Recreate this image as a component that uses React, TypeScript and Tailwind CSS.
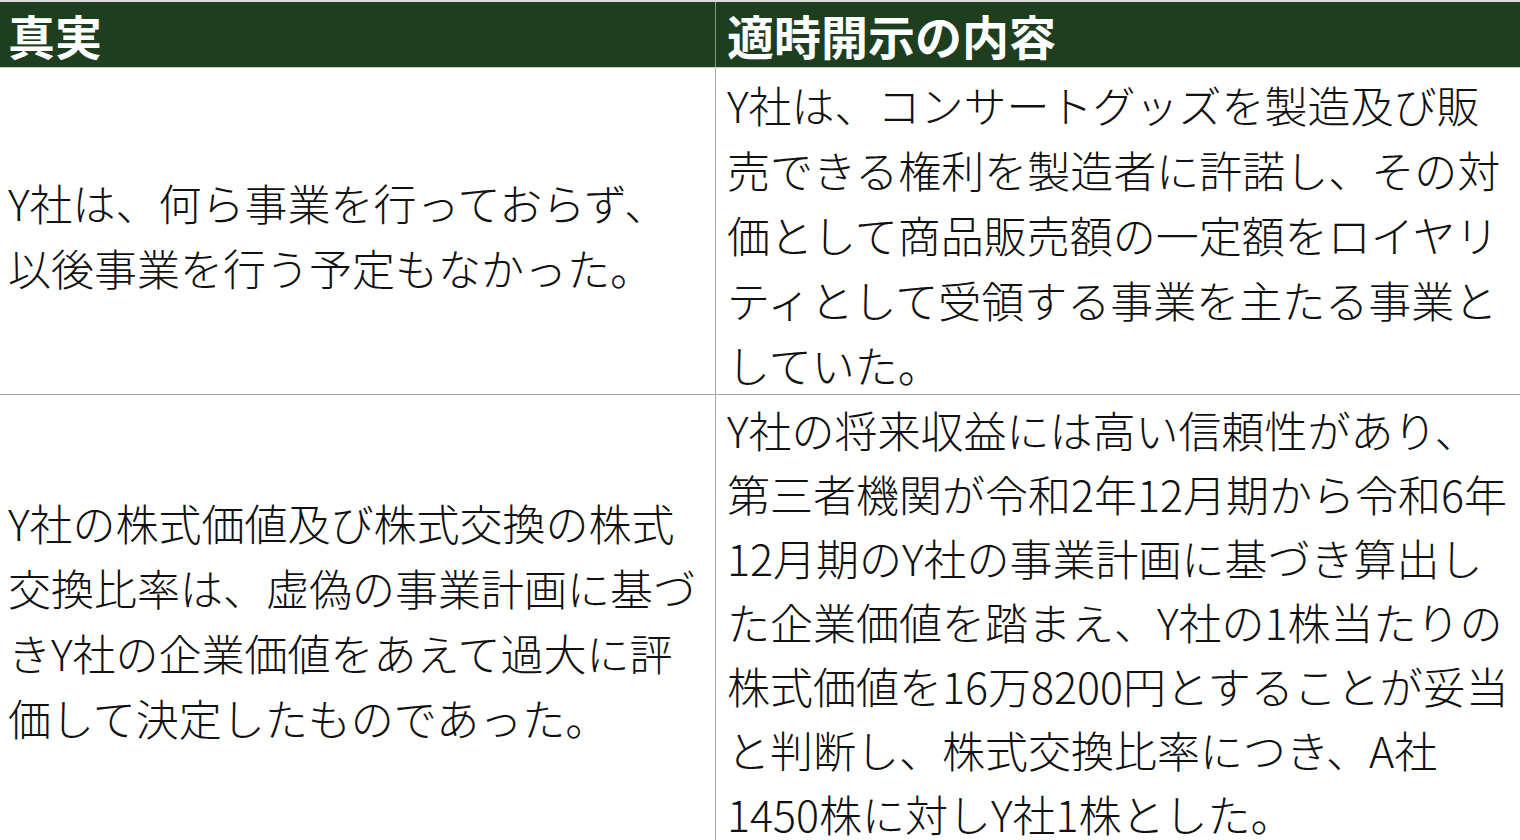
const jp = { fontFamily: '"Noto Sans CJK JP", "Noto Sans", sans-serif' };

const rows = [
  {
    left: ['Y社は、何ら事業を行っておらず、', '以後事業を行う予定もなかった。'],
    right: [
      'Y社は、コンサートグッズを製造及び販',
      '売できる権利を製造者に許諾し、その対',
      '価として商品販売額の一定額をロイヤリ',
      'ティとして受領する事業を主たる事業と',
      'していた。',
    ],
  },
  {
    left: [
      'Y社の株式価値及び株式交換の株式',
      '交換比率は、虚偽の事業計画に基づ',
      'きY社の企業価値をあえて過大に評',
      '価して決定したものであった。',
    ],
    right: [
      'Y社の将来収益には高い信頼性があり、',
      '第三者機関が令和2年12月期から令和6年',
      '12月期のY社の事業計画に基づき算出し',
      'た企業価値を踏まえ、Y社の1株当たりの',
      '株式価値を16万8200円とすることが妥当',
      'と判断し、株式交換比率につき、A社',
      '1450株に対しY社1株とした。',
    ],
  },
];

function Lines({ lines, tall }: { lines: string[]; tall?: boolean }) {
  return (
    <div
      className={`text-[43px] font-light text-[#111] whitespace-nowrap ${
        tall ? 'leading-[65px]' : 'leading-[64px]'
      }`}
    >
      {lines.map((l, i) => (
        <div key={i}>{l}</div>
      ))}
    </div>
  );
}

export default function App() {
  return (
    <div className="w-[1520px] h-[840px] overflow-hidden bg-white" style={jp}>
      <div className="border-t-2 border-[#d9dcd9]">
        <div className="grid grid-cols-[716px_1fr] bg-[#1e3f1f] h-[66px] border-b border-[#c9cfc9]">
          <div className="flex items-center pl-2 border-r border-[#8a9a8a] text-[47px] font-bold text-white leading-[60px]">
            真実
          </div>
          <div className="flex items-center pl-[11px] text-[47px] font-bold text-white leading-[60px]">
            適時開示の内容
          </div>
        </div>
        <div className="grid grid-cols-[716px_1fr] h-[327px] border-b border-[#a6a6a6]">
          <div className="flex items-center pl-2 pt-1 border-r border-[#a6a6a6]">
            <Lines lines={rows[0].left} tall />
          </div>
          <div className="flex items-center pl-[11px] pt-1">
            <Lines lines={rows[0].right} tall />
          </div>
        </div>
        <div className="grid grid-cols-[716px_1fr]">
          <div className="flex items-center pl-2 border-r border-[#a6a6a6]">
            <Lines lines={rows[1].left} tall />
          </div>
          <div className="pl-[11px] pt-[2px]">
            <Lines lines={rows[1].right} />
          </div>
        </div>
      </div>
    </div>
  );
}
